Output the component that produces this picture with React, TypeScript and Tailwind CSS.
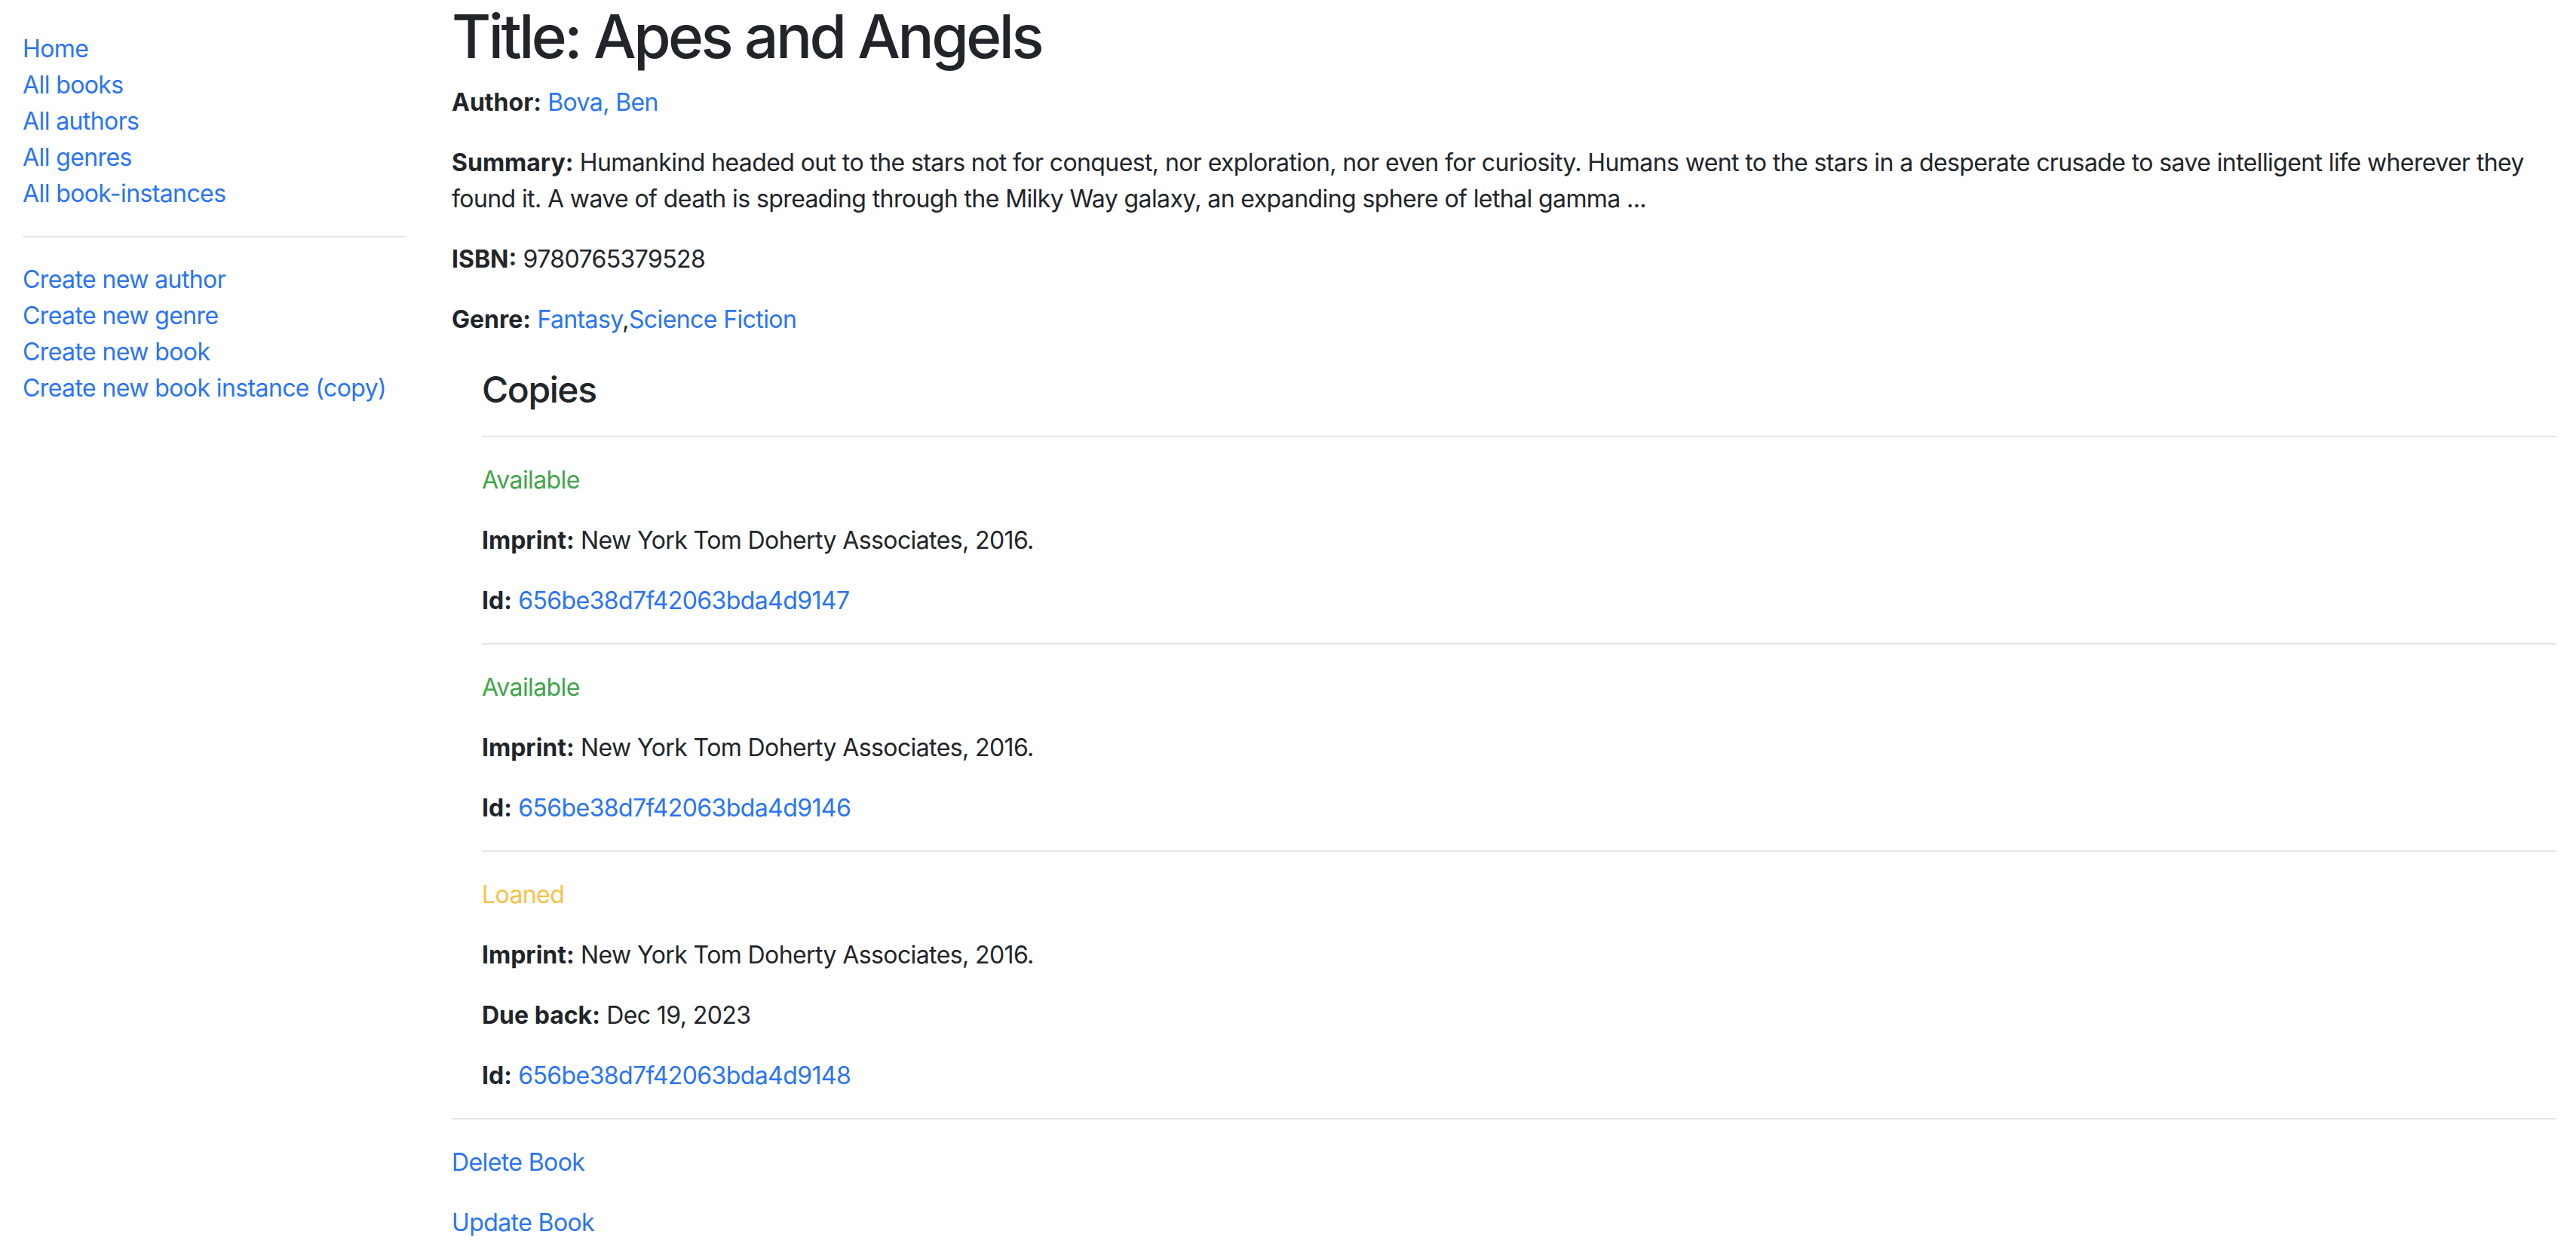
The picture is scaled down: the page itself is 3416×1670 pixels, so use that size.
import React from 'react';

const font = { fontFamily: 'Inter, "Noto Sans", sans-serif' };

const sideLinks = ['Home', 'All books', 'All authors', 'All genres', 'All book-instances'];
const createLinks = ['Create new author', 'Create new genre', 'Create new book', 'Create new book instance (copy)'];

interface Copy {
  status: 'Available' | 'Loaned';
  imprint: string;
  dueBack?: string;
  id: string;
}

const copies: Copy[] = [
  { status: 'Available', imprint: 'New York Tom Doherty Associates, 2016.', id: '656be38d7f42063bda4d9147' },
  { status: 'Available', imprint: 'New York Tom Doherty Associates, 2016.', id: '656be38d7f42063bda4d9146' },
  { status: 'Loaned', imprint: 'New York Tom Doherty Associates, 2016.', dueBack: 'Dec 19, 2023', id: '656be38d7f42063bda4d9148' },
];

const Link = ({ children }: { children: React.ReactNode }) => (
  <a href="#" className="text-[#2a74f5] no-underline">{children}</a>
);

const Label = ({ children }: { children: React.ReactNode }) => (
  <strong className="font-bold tracking-normal">{children}</strong>
);

const Rule = () => <hr className="border-0 border-t-2 border-[#e5e5e5] my-0" />;

const App = () => {
  return (
    <div style={font} className="min-h-screen bg-white text-[#212529] text-[32px] leading-[48px] tracking-[-0.6px] flex">
      <div className="w-[569px] shrink-0 px-[30px]">
        <ul className="mt-[41px]">
          {sideLinks.map((l) => (
            <li key={l}><Link>{l}</Link></li>
          ))}
          <li className="py-[32px]"><Rule /></li>
          {createLinks.map((l) => (
            <li key={l}><Link>{l}</Link></li>
          ))}
        </ul>
      </div>

      <div className="flex-1 px-[30px] pr-[26px]">
        <h1 className="text-[80px] leading-[96px] font-medium tracking-[-3.5px] mb-[16px]">Title: Apes and Angels</h1>
        <p className="mb-[32px]"><Label>Author:</Label> <Link>Bova, Ben</Link></p>
        <p className="mb-[32px]">
          <Label>Summary:</Label> Humankind headed out to the stars not for conquest, nor exploration, nor even for curiosity. Humans went to the stars in a desperate crusade to save intelligent life wherever they found it. A wave of death is spreading through the Milky Way galaxy, an expanding sphere of lethal gamma ...
        </p>
        <p className="mb-[32px]"><Label>ISBN:</Label> 9780765379528</p>
        <p><Label>Genre:</Label> <Link>Fantasy</Link>,<Link>Science Fiction</Link></p>

        <div className="ml-[40px] mt-[40px]">
          <h4 className="text-[48px] leading-[58px] font-medium tracking-[-1.4px]">Copies</h4>
          {copies.map((c) => (
            <div key={c.id}>
              <div className="py-[32px]"><Rule /></div>
              <div className="flex flex-col gap-[32px] pt-[1px]">
                <p className={c.status === 'Available' ? 'text-[#3fa54a]' : 'text-[#f8c146]'}>{c.status}</p>
                <p><Label>Imprint:</Label> {c.imprint}</p>
                {c.dueBack && <p><Label>Due back:</Label> {c.dueBack}</p>}
                <p><Label>Id:</Label> <Link>{c.id}</Link></p>
              </div>
            </div>
          ))}
        </div>

        <div className="py-[32px]"><Rule /></div>
        <div className="flex flex-col gap-[32px] pb-[32px] pt-[1px]">
          <p><Link>Delete Book</Link></p>
          <p><Link>Update Book</Link></p>
        </div>
      </div>
    </div>
  );
};

export default App;
